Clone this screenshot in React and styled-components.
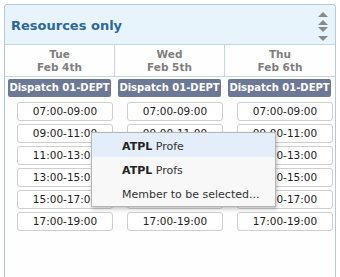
import React from "react";
import styled, { createGlobalStyle } from "styled-components";

const days = [
  { day: "Tue", date: "Feb 4th" },
  { day: "Wed", date: "Feb 5th" },
  { day: "Thu", date: "Feb 6th" },
];

const slots = [
  "07:00-09:00",
  "09:00-11:00",
  "11:00-13:00",
  "13:00-15:00",
  "15:00-17:00",
  "17:00-19:00",
];

const Global = createGlobalStyle`
  html, body {
    margin: 0;
    padding: 0;
    background: #fff;
    overflow: hidden;
  }
  body {
    font-family: "DejaVu Sans", Verdana, sans-serif;
  }
`;

const Page = () => {
  return (
    <Wrap>
      <Global />
      <Panel>
        <Header>
          <Title>Resources only</Title>
          <Scroller>
            <svg width="12" height="32" viewBox="0 0 12 32">
              <path d="M1 6 L6 1 L11 6 Z" fill="#8a8a8a" />
              <path d="M1 14 L6 9 L11 14 Z" fill="#8a8a8a" />
              <path d="M1 16 L11 16 L6 21 Z" fill="#8a8a8a" />
              <path d="M1 25 L11 25 L6 30 Z" fill="#8a8a8a" />
            </svg>
          </Scroller>
        </Header>
        <DayRow>
          {days.map((d) => (
            <DayHead key={d.day}>
              <span>{d.day}</span>
              <span>{d.date}</span>
            </DayHead>
          ))}
        </DayRow>
        <Body>
          {days.map((d) => (
            <Column key={d.day}>
              <Dept>Dispatch 01-DEPT</Dept>
              {slots.map((s) => (
                <Slot key={s}>{s}</Slot>
              ))}
            </Column>
          ))}
        </Body>
        <Menu>
          <MenuItem active>
            <b>ATPL</b> Profe
          </MenuItem>
          <MenuItem>
            <b>ATPL</b> Profs
          </MenuItem>
          <MenuItem>Member to be selected...</MenuItem>
        </Menu>
      </Panel>
    </Wrap>
  );
};

export default Page;

const Wrap = styled.div`
  padding: 4px 0 0 4px;
  width: 340px;
  height: 277px;
  box-sizing: border-box;
  overflow: hidden;
`;

const Panel = styled.div`
  position: relative;
  width: 332px;
  height: 274px;
  box-sizing: border-box;
  border: 1px solid #b3c9dd;
  border-bottom: none;
  border-radius: 4px 4px 0 0;
  background: #fefefe;
`;

const Header = styled.div`
  height: 39px;
  display: flex;
  align-items: center;
  justify-content: space-between;
  padding: 0 6px 0 6px;
  background: #e8f4fc;
  border-bottom: 1px solid #c6d6e4;
  border-radius: 4px 4px 0 0;
`;

const Title = styled.div`
  font-size: 13px;
  font-weight: bold;
  color: #2b6797;
  padding-top: 2px;
`;

const Scroller = styled.div`
  display: flex;
  align-items: center;
  margin-top: 4px;
`;

const DayRow = styled.div`
  display: grid;
  grid-template-columns: 109px 110px 111px;
  height: 31px;
  border-bottom: 1px solid #c6d6e4;
`;

const DayHead = styled.div`
  display: flex;
  flex-direction: column;
  align-items: center;
  justify-content: center;
  font-size: 10.5px;
  font-weight: bold;
  color: #808080;
  line-height: 13px;
  & + & {
    border-left: 1px solid #c6d6e4;
  }
`;

const Body = styled.div`
  display: grid;
  grid-template-columns: 110px 110px 110px;
  padding-top: 2px;
`;

const Column = styled.div`
  display: flex;
  flex-direction: column;
  align-items: stretch;
  gap: 3px;
`;

const Dept = styled.div`
  height: 18px;
  margin: 0 4px 2px 3px;
  background: #6b7896;
  color: #fff;
  border-radius: 2px;
  font-size: 10px;
  font-weight: bold;
  line-height: 18px;
  text-align: center;
  white-space: nowrap;
`;

const Slot = styled.div`
  height: 17px;
  margin: 0 2px 0 12px;
  background: #fff;
  border: 1px solid #cfcfcf;
  border-radius: 3px;
  font-size: 10.5px;
  line-height: 17px;
  color: #222;
  text-align: center;
`;

const Menu = styled.div`
  position: absolute;
  left: 86px;
  top: 127px;
  width: 183px;
  padding-bottom: 1px;
  background: #f8f8f8;
  border: 1px solid #b5b5b5;
  box-shadow: 1px 2px 4px rgba(0, 0, 0, 0.25);
`;

const MenuItem = styled.div`
  height: 24px;
  line-height: 27px;
  padding-left: 30px;
  font-size: 11px;
  color: #333;
  background: ${(p) => (p.active ? "#e4eefa" : "transparent")};
  b {
    color: #222;
  }
`;
